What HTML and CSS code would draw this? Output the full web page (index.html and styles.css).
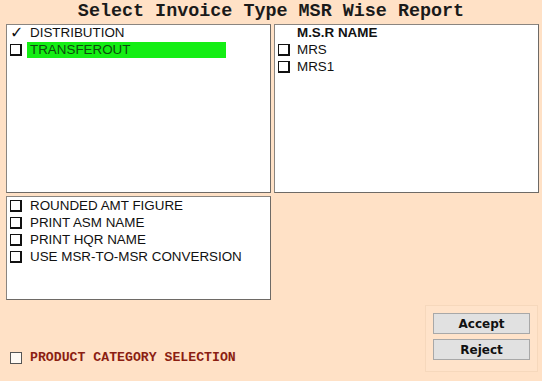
FILE: index.html
```html
<!DOCTYPE html>
<html lang="en">
<head>
    <meta charset="UTF-8">
    <title>Select Invoice Type MSR Wise Report</title>
    <link rel="stylesheet" href="styles.css">
</head>
<body>
    <div class="title">Select Invoice Type MSR Wise Report</div>
    <div class="grid">
        <div class="panel top">
            <div class="row"><span class="tick">&#10003;</span><span class="txt">DISTRIBUTION</span></div>
            <div class="row"><span class="cb"></span><span class="txt sel">TRANSFEROUT</span></div>
        </div>
        <div class="panel top right">
            <div class="row head"><span class="txt">M.S.R NAME</span></div>
            <div class="row"><span class="cb"></span><span class="txt">MRS</span></div>
            <div class="row"><span class="cb"></span><span class="txt">MRS1</span></div>
        </div>
        <div class="panel opts">
            <div class="row"><span class="cb"></span><span class="txt">ROUNDED AMT FIGURE</span></div>
            <div class="row"><span class="cb"></span><span class="txt">PRINT ASM NAME</span></div>
            <div class="row"><span class="cb"></span><span class="txt">PRINT HQR NAME</span></div>
            <div class="row"><span class="cb"></span><span class="txt">USE MSR-TO-MSR CONVERSION</span></div>
        </div>
    </div>
    <div class="footer">
        <label class="prod"><span class="pcb"></span>PRODUCT CATEGORY SELECTION</label>
        <div class="btnbox">
            <button class="btn">Accept</button>
            <button class="btn">Reject</button>
        </div>
    </div>
</body>
</html>
```

FILE: styles.css
```css
*{
    margin: 0;
    padding: 0;
    box-sizing: border-box;
}
body{
    width: 542px;
    height: 381px;
    background-color: #ffe1c6;
    font-family: "Liberation Sans", Arial, sans-serif;
    font-size: 13.4px;
    color: #111;
    overflow: hidden;
}
.title{
    height: 24px;
    line-height: 23px;
    text-align: center;
    font-family: "Liberation Mono", "Courier New", monospace;
    font-weight: bold;
    font-size: 18.4px;
    color: #1a1a1a;
}
.grid{
    display: grid;
    grid-template-columns: 265px 265px;
    column-gap: 3px;
    row-gap: 3px;
    padding-left: 6px;
}
.panel{
    background-color: #fff;
    border: 1px solid #8a8580;
    border-right-color: #6e6a66;
    border-bottom-color: #6e6a66;
    padding: 0 3px;
}
.top{
    height: 169px;
}
.top .row:first-child{
    margin-top: -1px;
}
.opts{
    height: 104px;
}
.row{
    display: flex;
    align-items: center;
    height: 17px;
}
.cb{
    flex: none;
    width: 12px;
    height: 12px;
    border: 1px solid #111;
    border-right-width: 2px;
    border-bottom-width: 2px;
    background-color: #fff;
}
.tick{
    flex: none;
    width: 13px;
    font-family: "DejaVu Sans", sans-serif;
    font-size: 16px;
    line-height: 14px;
    font-weight: bold;
}
.txt{
    margin-left: 8px;
    white-space: nowrap;
}
.tick + .txt{
    margin-left: 7px;
}
.sel{
    margin-left: 5px;
    width: 199px;
    height: 16px;
    line-height: 16px;
    padding-left: 3px;
    background-color: #14ee14;
    color: #0d4a0d;
}
.right .txt{
    margin-left: 7px;
}
.right .head .txt{
    margin-left: 19px;
    font-weight: bold;
}
.footer{
    display: flex;
    justify-content: space-between;
    align-items: flex-end;
    height: 81px;
    padding: 0 4px 9px 10px;
}
.prod{
    display: flex;
    align-items: center;
    margin-bottom: 7px;
    font-family: "Liberation Mono", "Courier New", monospace;
    font-weight: bold;
    font-size: 13.2px;
    color: #8b1e12;
}
.pcb{
    width: 12px;
    height: 12px;
    margin-right: 8px;
    border: 1px solid #555;
    background-color: #fffaf4;
}
.btnbox{
    display: flex;
    flex-direction: column;
    align-items: center;
    gap: 5px;
    width: 113px;
    height: 67px;
    padding-top: 7px;
    background-color: #ffe3ca;
    border: 1px solid #f6d8bc;
}
.btn{
    width: 97px;
    height: 21px;
    background-color: #e1e1e1;
    border: 1px solid #a8a8a8;
    font-family: "DejaVu Sans", sans-serif;
    font-weight: bold;
    font-size: 12px;
    color: #111;
}
```
